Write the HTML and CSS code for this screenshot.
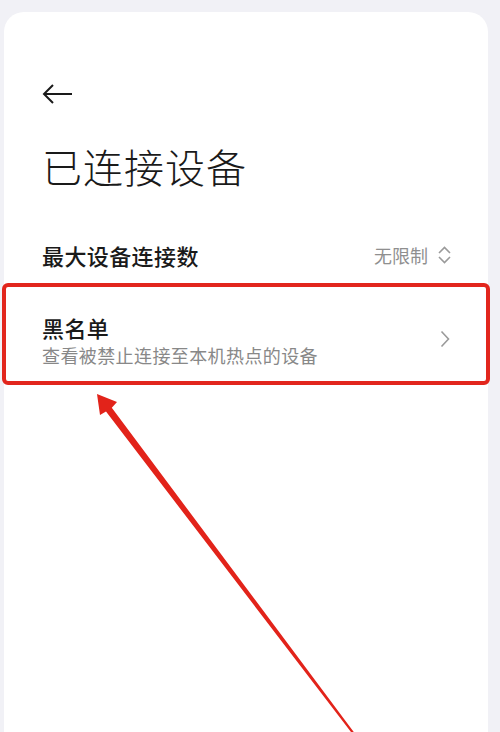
FILE: index.html
```html
<!DOCTYPE html>
<html lang="zh-CN">
<head>
    <meta charset="UTF-8">
    <title>已连接设备</title>
    <link rel="stylesheet" href="styles.css">
</head>
<body>
    <div class="page">
        <div class="card">
            <button class="back-btn" aria-label="返回">
                <svg width="30" height="20" viewBox="0 0 30 20">
                    <path d="M11 1 L2 10 L11 19 M2 10 H30" fill="none" stroke="#1a1a1a" stroke-width="2"/>
                </svg>
            </button>
            <h1 class="title">已连接设备</h1>

            <div class="row">
                <div class="row-label">最大设备连接数</div>
                <div class="row-value">
                    无限制
                    <svg width="15" height="22" viewBox="0 0 15 22">
                        <path d="M2 9 L7.5 3.5 L13 9 M2 13 L7.5 18.5 L13 13" fill="none" stroke="#9a9a9a" stroke-width="1.6"/>
                    </svg>
                </div>
            </div>

            <!-- highlighted row -->
            <div class="row row-link marked">
                <div class="row-text">
                    <div class="row-label">黑名单</div>
                    <div class="row-sub">查看被禁止连接至本机热点的设备</div>
                </div>
                <svg class="chevron" width="10" height="18" viewBox="0 0 10 18">
                    <path d="M1.5 1.5 L8.5 9 L1.5 16.5" fill="none" stroke="#9a9a9a" stroke-width="1.6"/>
                </svg>
            </div>
        </div>
    </div>

    <svg class="pointer" width="500" height="732" viewBox="0 0 500 732">
        <polygon points="97,394 117,402 111.8,407.8 354.5,733 352.5,734 106,411.6 100,415" fill="#e2231a"/>
    </svg>
</body>
</html>
```

FILE: styles.css
```css
body { margin: 0; background: #f1f1f6; font-family: "Noto Sans CJK SC", "Noto Sans", sans-serif; color: #1a1a1a; }
.page { padding: 12px 12px 0 4px; height: 720px; overflow: hidden; }
.card { background: #fff; border-radius: 20px 20px 0 0; height: 740px; padding-top: 72px; box-sizing: border-box; }
.back-btn { display: block; margin-left: 38px; padding: 0; border: none; background: none; height: 20px; }
.back-btn svg { display: block; }
.title { margin: 34px 0 0 38px; font-size: 40px; line-height: 56px; font-weight: 300; letter-spacing: 1px; }
.row { display: flex; align-items: center; justify-content: space-between; padding: 0 36px 0 38px; height: 60px; margin-top: 31px; }
.row-label { font-size: 22px; line-height: 30px; font-weight: 500; letter-spacing: 0.4px; }
.row-value { display: flex; align-items: center; gap: 9px; font-size: 18px; color: #8f8f8f; }
.row-value svg { display: block; }
.row-link { height: 98px; margin-top: 0; padding: 27px 38px 14px 38px; box-sizing: border-box; align-items: flex-start; }
.row-sub { font-size: 18px; line-height: 24px; color: #888; margin-top: 1px; letter-spacing: 0.4px; }
.chevron { display: block; margin-top: 18px; }
.marked { outline: 4px solid #e2261d; outline-offset: -2px; border-radius: 4px; }
.pointer { position: absolute; top: 0; left: 0; pointer-events: none; }
```
